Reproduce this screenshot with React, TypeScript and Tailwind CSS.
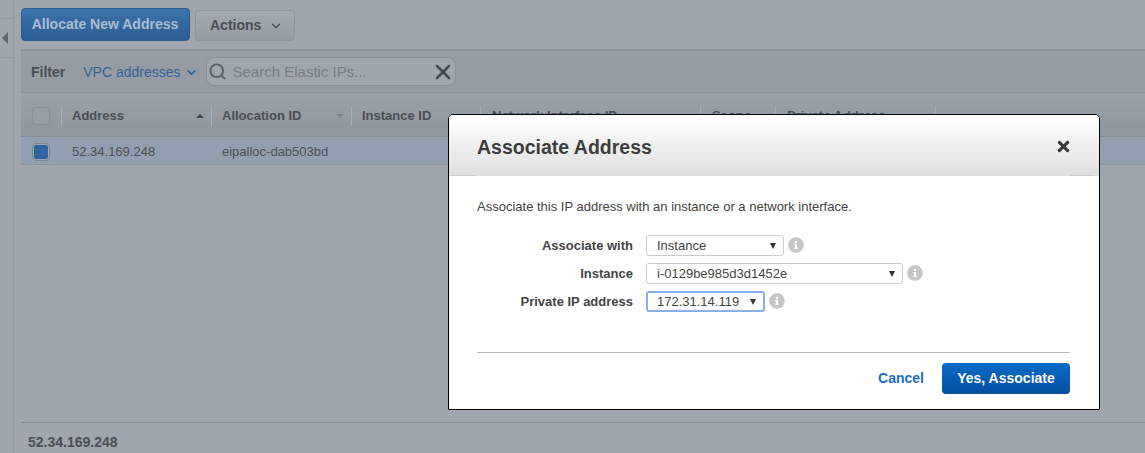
import { FaInfoCircle, FaTimes } from 'react-icons/fa';
import { Search, X, ChevronDown } from 'lucide-react';

const columns = [
  { label: 'Address', width: 'w-[150px]', pad: 'pl-[10px]', sort: 'up' },
  { label: 'Allocation ID', width: 'w-[140px]', pad: 'pl-[10px]', sort: 'down' },
  { label: 'Instance ID', width: 'w-[129px]', pad: 'pl-[10px]' },
  { label: 'Network Interface ID', width: 'w-[220px]', pad: 'pl-[11px]' },
  { label: 'Scope', width: 'w-[75px]', pad: 'pl-[11px]' },
  { label: 'Private Address', width: 'w-[160px]', pad: 'pl-[11px]' },
];

const fields = [
  { label: 'Associate with', value: 'Instance', width: 'w-[138px]' },
  { label: 'Instance', value: 'i-0129be985d3d1452e', width: 'w-[257px]' },
  { label: 'Private IP address', value: '172.31.14.119', width: 'w-[119px]', focused: true },
];

function Field({ field }: { field: (typeof fields)[0] }) {
  return (
    <div className="flex items-center h-[21px] mb-[7px]">
      <label className="w-[156px] text-right text-[13px] font-bold text-[#444]">{field.label}</label>
      <div
        className={`ml-[13px] h-[21px] ${field.width} flex items-center justify-between pr-[7px] rounded-[3px] bg-white text-[13px] text-[#444] ${
          field.focused ? 'border-2 border-[#8ab0ea] pl-[9px]' : 'border border-[#ccc] pl-[10px]'
        }`}
      >
        <span>{field.value}</span>
        <span className="w-0 h-0 border-l-[3.5px] border-r-[3.5px] border-t-[6px] border-l-transparent border-r-transparent border-t-[#333]" />
      </div>
      <FaInfoCircle className="ml-[4px] -mt-[1px] text-[#c6c6c6]" size={16} />
    </div>
  );
}

export default function App() {
  return (
    <div className="relative w-[1145px] h-[453px] overflow-hidden flex bg-[#9fa6ad] text-[#4a4f55] font-['Liberation_Sans',Arial,sans-serif]">
      {/* collapsed side nav */}
      <div className="w-[14px] shrink-0 border-r border-[#949ba2] pt-[18px]">
        <div className="h-[40px] border-y border-[#949ba2] flex items-center pl-[2px]">
          <span className="w-0 h-0 border-y-[6px] border-r-[6px] border-y-transparent border-r-[#5f666d]" />
        </div>
      </div>

      <div className="flex-1 min-w-0 pl-[7px] flex flex-col">
        {/* toolbar */}
        <div className="h-[51px] shrink-0 border-b-2 border-[#8a9198] flex items-start pt-[8px] gap-[5px]">
          <button className="h-[33px] w-[169px] pr-[1px] rounded-[4px] border border-[#2a5b8c] bg-gradient-to-b from-[#3c74aa] to-[#2c5d92] text-[14px] font-bold text-[#a9bdd2]">
            Allocate New Address
          </button>
          <button className="mt-[2px] h-[31px] w-[100px] rounded-[4px] border border-[#8f969d] bg-gradient-to-b from-[#a3aab1] to-[#949ba2] text-[14px] font-bold text-[#4a4f55] flex items-center pl-[14px] gap-[8px]">
            Actions
            <ChevronDown size={14} strokeWidth={2.5} />
          </button>
        </div>

        {/* filter bar */}
        <div className="h-[42px] shrink-0 bg-[#959ca3] border-b border-[#8a9198] flex items-center pl-[10px]">
          <span className="pt-[1px] text-[14px] font-bold">Filter</span>
          <span className="pt-[1px] ml-[18px] text-[14px] text-[#2f6397] flex items-center gap-[4px]">
            VPC addresses
            <ChevronDown size={13} strokeWidth={3} />
          </span>
          <div className="ml-[8px] w-[250px] h-[29px] rounded-[8px] border border-[#8a9198] bg-[#9fa6ad] flex items-center pl-[1px]">
            <Search size={19} strokeWidth={2.5} className="text-[#5b6269]" />
            <span className="pt-[1px] ml-[6px] flex-1 text-[15px] text-[#767d84]">Search Elastic IPs...</span>
            <X size={24} strokeWidth={2.5} className="text-[#454b51]" />
          </div>
        </div>

        {/* table */}
        <div className="h-[44px] shrink-0 pt-[2px] bg-gradient-to-b from-[#9aa1a8] to-[#8f969d] border-b border-[#858c93] flex items-center">
          <div className="w-[41px] h-[20px] flex items-center border-r border-[#a6adb3] pl-[11px]">
            <span className="w-[18px] h-[18px] rounded-[4px] border border-[#8a9198] bg-[#979ea5]" />
          </div>
          {columns.map((col) => (
            <div
              key={col.label}
              className={`${col.width} ${col.pad} h-[20px] flex items-center justify-between border-r border-[#a6adb3] pr-[7px] text-[13px] font-bold`}
            >
              <span className="whitespace-nowrap">{col.label}</span>
              {col.sort === 'up' && (
                <span className="w-0 h-0 border-x-[4px] border-b-[4px] border-x-transparent border-b-[#3f454b]" />
              )}
              {col.sort === 'down' && (
                <span className="w-0 h-0 border-x-[4px] border-t-[4px] border-x-transparent border-t-[#7d848b]" />
              )}
            </div>
          ))}
        </div>
        <div className="h-[28px] shrink-0 pt-[2px] bg-[#929fb0] border-b border-[#8b949d] flex items-center text-[13px]">
          <div className="w-[40px] pl-[11px] flex">
            <span className="w-[18px] h-[18px] rounded-[4px] border border-[#7f8892] bg-[#9ba5b1] flex items-center justify-center">
              <span className="w-[14px] h-[14px] rounded-[2px] bg-[#2f64a0]" />
            </span>
          </div>
          <div className="w-[150px] pl-[11px]">52.34.169.248</div>
          <div className="w-[140px] pl-[11px]">eipalloc-dab503bd</div>
        </div>

        <div className="flex-1" />

        {/* details pane */}
        <div className="h-[31px] shrink-0 border-t border-[#858c93] pl-[7px] pt-[10px] text-[14px] leading-[18px] font-bold">
          52.34.169.248
        </div>
      </div>

      {/* modal */}
      <div className="absolute left-[448px] top-[114px] w-[652px] h-[296px] rounded-t-[5px] border border-black bg-white flex flex-col">
        <div className="relative h-[61px] shrink-0 rounded-t-[4px] bg-gradient-to-b from-white to-[#e0e0e0] flex items-center justify-between pl-[28px] pr-[27px]">
          <h2 className="mt-[4px] text-[19.5px] font-bold text-[#3d3d3d]">Associate Address</h2>
          <FaTimes size={17} className="mt-[1px] text-[#3a3a3a]" />
          <span className="absolute left-0 bottom-0 w-[26px] h-px bg-[#ccc]" />
          <span className="absolute right-[4px] bottom-0 w-[25px] h-px bg-[#ccc]" />
        </div>
        <div className="flex-1 pl-[28px] pr-[29px] pt-[23px] flex flex-col">
          <p className="text-[13px] leading-[16px] text-[#444] mb-[20px]">
            Associate this IP address with an instance or a network interface.
          </p>
          {fields.map((field) => (
            <Field key={field.label} field={field} />
          ))}
          <div className="mt-[33px] border-t border-[#bbb] flex items-center justify-end pt-[10px]">
            <span className="text-[14px] font-bold text-[#1b6cc4] mr-[18px]">Cancel</span>
            <button className="h-[31px] w-[128px] rounded-[4px] bg-gradient-to-b from-[#0d6cc8] to-[#004f9f] text-[14px] font-bold text-white">
              Yes, Associate
            </button>
          </div>
        </div>
      </div>
    </div>
  );
}
